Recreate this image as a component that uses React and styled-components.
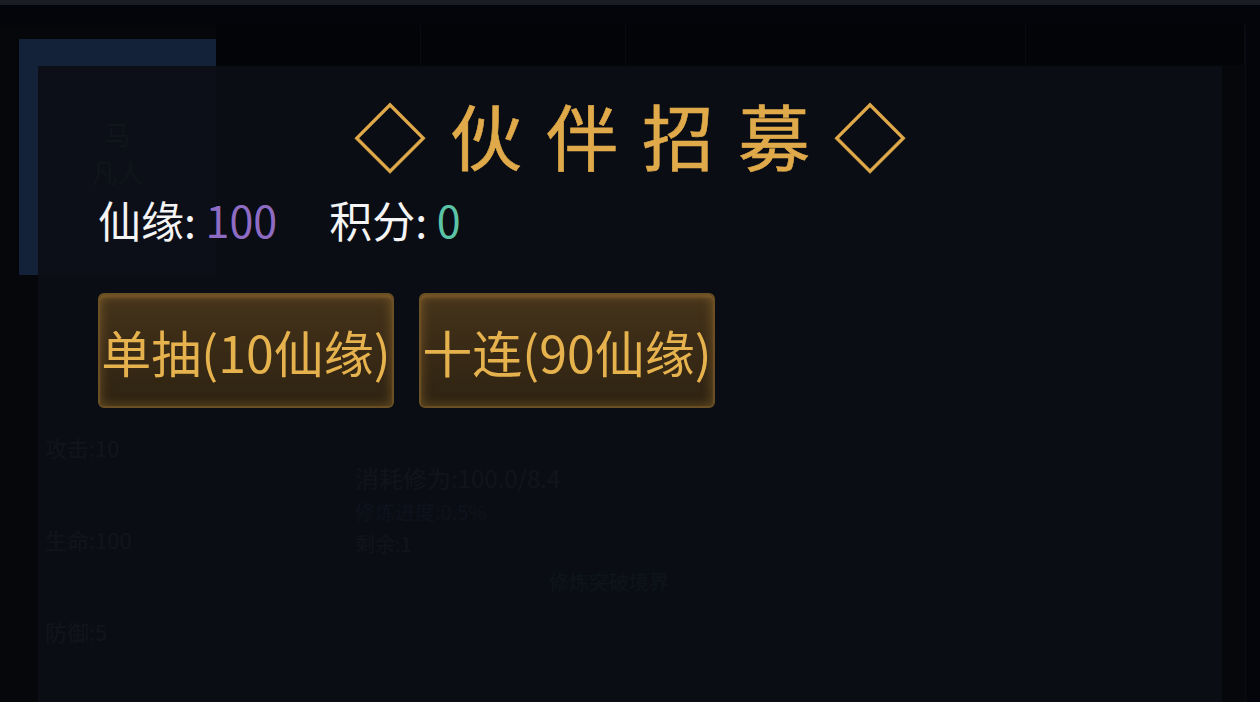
import React from 'react';
import styled, { createGlobalStyle } from 'styled-components';

const GlobalStyle = createGlobalStyle`
    html, body {
        margin: 0;
        padding: 0;
        background: #05060a;
        font-family: "Noto Sans CJK SC", "Noto Sans", sans-serif;
    }
`;

const Screen = styled.div`
    position: relative;
    width: 1260px;
    height: 702px;
    overflow: hidden;
    background: #04050a;
`;

const TopStrip = styled.div`
    height: 5px;
    background: #1b1d24;
`;

// the page that sits behind the popup, only faintly visible
const BackPage = styled.div`
    display: grid;
    grid-template-columns: 216px 1fr;
    width: 1245px;
    height: 677px;
    margin-top: 20px;
    background: #06070b;
    border-right: 1px solid #0b0d13;
`;

const LeftCol = styled.div`
    display: flex;
    flex-direction: column;
    padding: 14px 0 0 19px;
`;

const HeroCard = styled.div`
    display: flex;
    flex-direction: column;
    align-items: center;
    justify-content: center;
    gap: 8px;
    height: 236px;
    background: #132238;
    color: #4f6762;
    font-size: 26px;
    line-height: 30px;
    padding-bottom: 8px;
    box-sizing: border-box;
`;

const StatList = styled.div`
    display: flex;
    flex-direction: column;
    gap: 68px;
    margin-top: 160px;
    padding-left: 26px;
`;

const Stat = styled.div`
    color: ${p => p.$color || '#5c606b'};
    font-size: 22px;
    line-height: 24px;
`;

const RightCol = styled.div`
    display: flex;
    flex-direction: column;
`;

const TabBar = styled.div`
    display: grid;
    grid-template-columns: 205px 205px 400px 1fr;
    height: 40px;
    background: #030407;

    & > div {
        border-right: 1px solid #0a0b10;
    }
`;

const Progress = styled.div`
    display: flex;
    flex-direction: column;
    gap: 10px;
    margin: 400px 0 0 139px;
    width: 320px;
`;

const FaintLine = styled.div`
    color: ${p => p.$color || '#5c606b'};
    font-size: ${p => p.$size || 22}px;
    line-height: 1.1;
`;

const FaintButton = styled.div`
    align-self: flex-end;
    padding: 2px 6px;
    color: #2a6e3b;
    font-size: 20px;
`;

// popup
const Modal = styled.div`
    position: absolute;
    left: 38px;
    top: 66px;
    width: 1184px;
    height: 636px;
    background: rgba(12, 14, 22, 0.93);
    padding: 25px 60px 0;
    box-sizing: border-box;
    display: flex;
    flex-direction: column;
`;

const Title = styled.h2`
    margin: 0;
    text-align: center;
    font-size: 72px;
    line-height: 86px;
    font-weight: 400;
    letter-spacing: 24px;
    padding-left: 24px;
    color: #e0aa4a;
    -webkit-text-stroke: 0.6px #e0aa4a;
`;

const Wallet = styled.div`
    display: flex;
    gap: 52px;
    margin-top: 17px;
    font-size: 43px;
    line-height: 50px;
    color: #f4f4f4;
`;

const Amount = styled.span`
    color: ${p => p.$color};
`;

const ButtonRow = styled.div`
    display: flex;
    gap: 25px;
    margin-top: 49px;
`;

const DrawButton = styled.button`
    display: flex;
    align-items: center;
    justify-content: center;
    width: 296px;
    height: 115px;
    padding: 0;
    border: 2px solid #6a4f24;
    border-radius: 6px;
    background: linear-gradient(180deg, #46341b 0%, #3a2b16 45%, #2e2312 100%);
    box-shadow: inset 0 0 12px rgba(214, 160, 70, 0.35), inset 0 3px 2px rgba(190, 140, 60, 0.2);
    color: #e6b24e;
    font-family: inherit;
    font-size: 50px;
    white-space: nowrap;
    cursor: pointer;
`;

const App = () => {
    return (
        <Screen>
            <GlobalStyle />
            <TopStrip />
            <BackPage>
                <LeftCol>
                    <HeroCard>
                        <span>马</span>
                        <span>凡人</span>
                    </HeroCard>
                    <StatList>
                        <Stat>攻击:10</Stat>
                        <Stat>生命:100</Stat>
                        <Stat>防御:5</Stat>
                    </StatList>
                </LeftCol>
                <RightCol>
                    <TabBar>
                        <div />
                        <div />
                        <div />
                        <div />
                    </TabBar>
                    <Progress>
                        <FaintLine $size={24}>消耗修为:100.0/8.4</FaintLine>
                        <FaintLine $color="#34497a" $size={20}>修炼进度:0.5%</FaintLine>
                        <FaintLine $size={20}>剩余:1</FaintLine>
                        <FaintButton>修炼突破境界</FaintButton>
                    </Progress>
                </RightCol>
            </BackPage>

            <Modal>
                <Title>◇伙伴招募◇</Title>
                <Wallet>
                    <span>仙缘: <Amount $color="#8f6cc4">100</Amount></span>
                    <span>积分: <Amount $color="#5cc4a6">0</Amount></span>
                </Wallet>
                <ButtonRow>
                    <DrawButton>单抽(10仙缘)</DrawButton>
                    <DrawButton>十连(90仙缘)</DrawButton>
                </ButtonRow>
            </Modal>
        </Screen>
    );
};

export default App;
